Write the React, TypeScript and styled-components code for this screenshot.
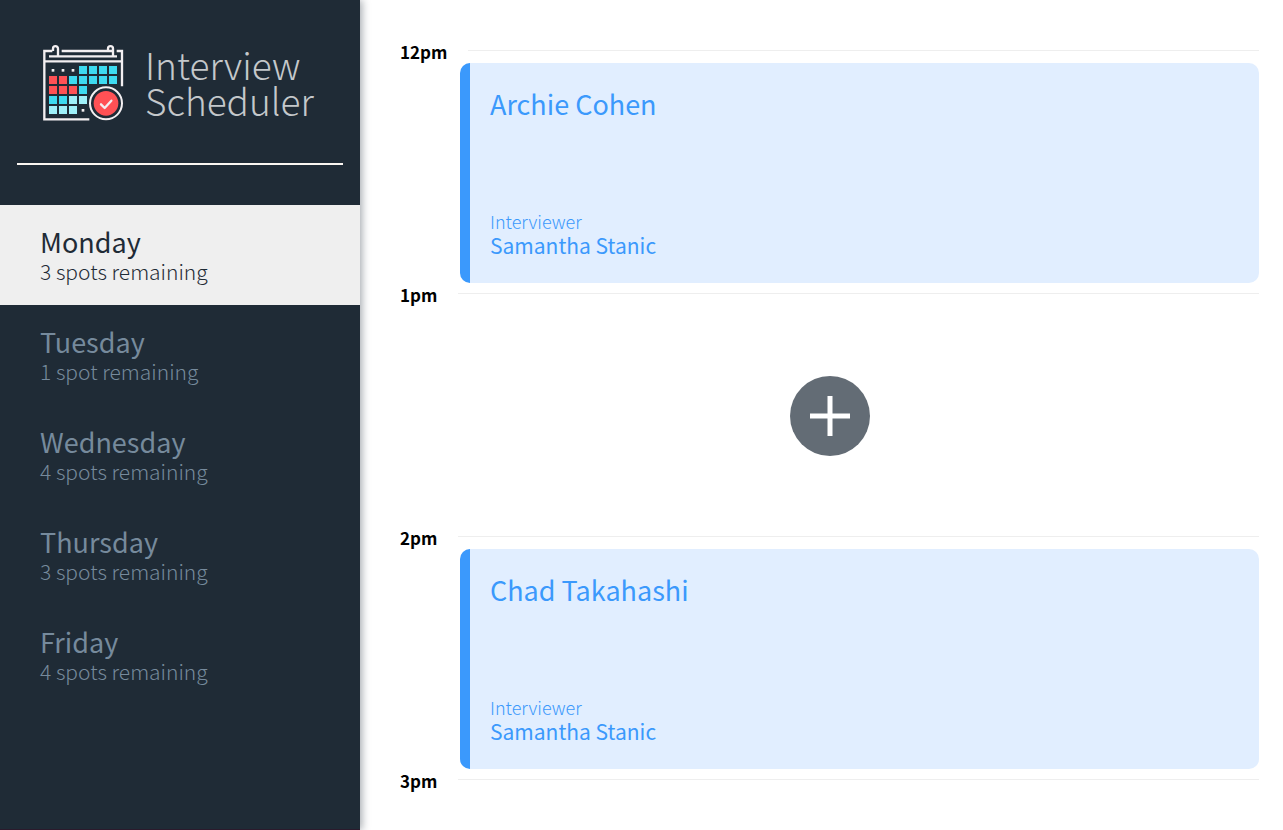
import React, { useState } from "react";
import styled, { createGlobalStyle } from "styled-components";

const GlobalStyle = createGlobalStyle`
  *, *::before, *::after { box-sizing: border-box; }
  body {
    margin: 0;
    background: #fff;
    font-family: "Noto Sans CJK SC", "Noto Sans", sans-serif;
    font-weight: 400;
  }
  h1, h2, h3, h4, p, ul { margin: 0; padding: 0; font-weight: inherit; }
  button { font: inherit; border: 0; cursor: pointer; }
`;

const Layout = styled.main`
  display: flex;
  min-height: 100vh;
`;

const Sidebar = styled.aside`
  flex: none;
  width: 360px;
  background: #1f2b36;
  border-bottom: 1px solid #2b1a2c;
  box-shadow: 2px 0 8px rgba(31, 43, 54, 0.4);
`;

const Brand = styled.h1`
  display: flex;
  align-items: center;
  gap: 21px;
  height: 163px;
  padding: 0 0 0 42px;
`;

const BrandName = styled.span`
  color: #c4c8cb;
  font-size: 37px;
  font-weight: 300;
  line-height: 36px;
`;

const Divider = styled.hr`
  height: 2px;
  margin: 0 17px 40px;
  border: 0;
  background: #faf6f2;
`;

const DayList = styled.ul`
  list-style: none;
`;

const DayButton = styled.button<{ $selected: boolean }>`
  display: flex;
  flex-direction: column;
  justify-content: center;
  width: 100%;
  height: 100px;
  padding: 0 40px;
  text-align: left;
  color: ${(p) => (p.$selected ? "#1f2b36" : "#768a9c")};
  background: ${(p) => (p.$selected ? "#efefef" : "transparent")};
`;

const DayName = styled.span`
  font-size: 27px;
  line-height: 32px;
`;

const DaySpots = styled.span`
  font-size: 21px;
  font-weight: 300;
  line-height: 26px;
`;

const Schedule = styled.section`
  flex: 1;
  min-width: 0;
  padding: 40px 24px 0 40px;
`;

const Slot = styled.article`
  display: flow-root;
`;

const SlotHeader = styled.header`
  display: flex;
  align-items: center;
  gap: 21px;
  height: 23px;
`;

const SlotTime = styled.h4`
  font-size: 17px;
  font-weight: 700;
  line-height: 24px;
  color: #000;
`;

const SlotRule = styled.hr`
  flex: 1;
  height: 1px;
  margin: 0 0 2px;
  border: 0;
  background: #eeeeee;
`;

const Card = styled.div`
  display: flex;
  flex-direction: column;
  justify-content: space-between;
  height: 220px;
  margin-left: 60px;
  padding: 23px 20px 26px;
  border-left: 10px solid #3b99fc;
  border-radius: 10px;
  background: #e1eeff;
  color: #3b99fc;
`;

const Student = styled.h2`
  font-size: 27px;
  line-height: 36px;
`;

const Caption = styled.h4`
  font-size: 18px;
  font-weight: 300;
  line-height: 24px;
`;

const Interviewer = styled.h3`
  font-size: 21px;
  line-height: 24px;
`;

const EmptySlot = styled.div`
  display: grid;
  place-items: center;
  height: 220px;
`;

const AddButton = styled.button`
  display: grid;
  place-items: center;
  width: 80px;
  height: 80px;
  padding: 0;
  border-radius: 50%;
  background: #636c75;
`;

const cyan = "#3edaf0";
const pale = "#9ff0f9";
const red = "#ff5155";
const cells: [number, number, string][] = [
  [3, 0, cyan], [4, 0, cyan], [5, 0, cyan], [6, 0, cyan],
  [0, 1, red], [1, 1, red], [2, 1, cyan], [3, 1, cyan], [4, 1, cyan], [5, 1, cyan], [6, 1, cyan],
  [0, 2, red], [1, 2, red], [2, 2, red], [3, 2, cyan],
  [0, 3, cyan], [1, 3, cyan], [2, 3, pale], [3, 3, pale],
  [0, 4, pale], [1, 4, pale], [2, 4, pale],
];

const CalendarLogo = () => (
  <svg width="82" height="77" viewBox="36 24 246 231" fill="none" overflow="visible" aria-hidden="true">
    <g stroke="#f3eff1" strokeWidth="7">
      <path d="M67 48H43V253H178M260 48H276V154M95 48H248M43 79H276" />
      <path d="M57 64H261" />
      <path d="M69 48V41a7 7 0 0 1 15 0V64M234 48V41a7 7 0 0 1 15 0V64" />
    </g>
    {cells.map(([c, r, fill]) => (
      <rect key={`${c}-${r}`} x={57 + c * 30} y={93 + r * 30} width="24" height="24" fill={fill} />
    ))}
    <g fill="#f3eff1">
      <rect x="65" y="102" width="8" height="8" />
      <rect x="95" y="102" width="8" height="8" />
      <rect x="125" y="102" width="8" height="8" />
      <rect x="155" y="222" width="8" height="8" />
    </g>
    <circle cx="228" cy="205" r="51" fill="#1f2b36" />
    <circle cx="228" cy="205" r="48" stroke="#f3eff1" strokeWidth="6" />
    <circle cx="228" cy="205" r="37" fill={red} />
    <path d="M213 208l11 11 20-22" stroke="#f3eff1" strokeWidth="7" strokeLinecap="round" strokeLinejoin="round" />
  </svg>
);

const days = [
  { name: "Monday", spots: 3 },
  { name: "Tuesday", spots: 1 },
  { name: "Wednesday", spots: 4 },
  { name: "Thursday", spots: 3 },
  { name: "Friday", spots: 4 },
];

const slots = [
  { time: "12pm", student: "Archie Cohen", interviewer: "Samantha Stanic" },
  { time: "1pm" },
  { time: "2pm", student: "Chad Takahashi", interviewer: "Samantha Stanic" },
];

const TimeHeader = ({ time }: { time: string }) => (
  <SlotHeader>
    <SlotTime>{time}</SlotTime>
    <SlotRule />
  </SlotHeader>
);

export default function App() {
  const [day, setDay] = useState("Monday");
  return (
    <Layout>
      <GlobalStyle />
      <Sidebar>
        <Brand>
          <CalendarLogo />
          <BrandName>
            Interview
            <br />
            Scheduler
          </BrandName>
        </Brand>
        <Divider />
        <nav>
          <DayList>
            {days.map(({ name, spots }) => (
              <li key={name}>
                <DayButton $selected={name === day} onClick={() => setDay(name)}>
                  <DayName>{name}</DayName>
                  <DaySpots>{`${spots} ${spots === 1 ? "spot" : "spots"} remaining`}</DaySpots>
                </DayButton>
              </li>
            ))}
          </DayList>
        </nav>
      </Sidebar>
      <Schedule>
        {slots.map(({ time, student, interviewer }) => (
          <Slot key={time}>
            <TimeHeader time={time} />
            {student ? (
              <Card>
                <Student>{student}</Student>
                <div>
                  <Caption>Interviewer</Caption>
                  <Interviewer>{interviewer}</Interviewer>
                </div>
              </Card>
            ) : (
              <EmptySlot>
                <AddButton aria-label="Add appointment">
                  <svg width="40" height="40" viewBox="0 0 40 40" aria-hidden="true">
                    <path d="M20 0V40M0 20H40" stroke="#fff" strokeWidth="5" />
                  </svg>
                </AddButton>
              </EmptySlot>
            )}
          </Slot>
        ))}
        <Slot>
          <TimeHeader time="3pm" />
        </Slot>
      </Schedule>
    </Layout>
  );
}
